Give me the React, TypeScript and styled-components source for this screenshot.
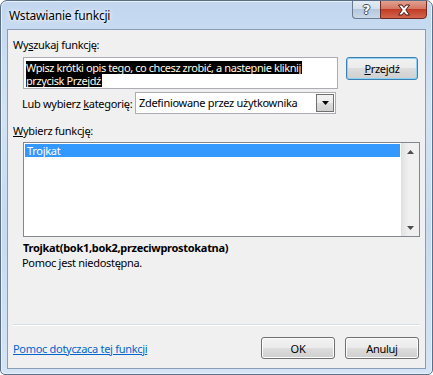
import React from "react";
import styled, { createGlobalStyle } from "styled-components";

const GlobalStyle = createGlobalStyle`
  html, body {
    margin: 0;
    padding: 0;
    background: #ffffff;
  }
  body {
    font-family: "Noto Sans", "Liberation Sans", sans-serif;
    font-size: 11px;
    letter-spacing: -0.3px;
    color: #000;
  }
`;

export default function App() {
  return (
    <>
      <GlobalStyle />
      <Window>
        <TitleBar>
          <TitleText>Wstawianie funkcji</TitleText>
          <CaptionButtons>
            <HelpButton>?</HelpButton>
            <CloseButton>
              <svg width="14" height="12" viewBox="0 0 14 12">
                <path
                  d="M1.5 1 H5 L7 3.6 L9 1 H12.5 L8.8 6 L12.5 11 H9 L7 8.4 L5 11 H1.5 L5.2 6 Z"
                  fill="#fff"
                  stroke="#4b1510"
                  strokeWidth="1"
                  strokeLinejoin="round"
                />
              </svg>
            </CloseButton>
          </CaptionButtons>
        </TitleBar>

        <Panel>
          <SectionLabel>
            Wy<u>s</u>zukaj funkcję:
          </SectionLabel>
          <SearchRow>
            <SearchBox>
              <Selected>Wpisz krótki opis tego, co chcesz zrobić, a nastepnie kliknij</Selected>
              <br />
              <Selected>przycisk Przejdź</Selected>
            </SearchBox>
            <Button $default $width={72} $height={23}>
              <u>P</u>rzejdź
            </Button>
          </SearchRow>

          <CategoryRow>
            <CategoryLabel>
              Lub wybierz <u>k</u>ategorię:
            </CategoryLabel>
            <Select>
              <SelectText>Zdefiniowane przez użytkownika</SelectText>
              <DropButton>
                <svg width="7" height="4" viewBox="0 0 7 4">
                  <path d="M0 0 H7 L3.5 4 Z" fill="#000" />
                </svg>
              </DropButton>
            </Select>
          </CategoryRow>

          <SectionLabel $top={9}>
            <u>W</u>ybierz funkcję:
          </SectionLabel>
          <ListBox>
            <ListItems>
              <ListItem $selected>Trojkat</ListItem>
            </ListItems>
            <ScrollBar>
              <ScrollArrow>
                <svg width="7" height="4" viewBox="0 0 7 4">
                  <path d="M0 4 H7 L3.5 0 Z" fill="#4d4d4d" />
                </svg>
              </ScrollArrow>
              <ScrollArrow>
                <svg width="7" height="4" viewBox="0 0 7 4">
                  <path d="M0 0 H7 L3.5 4 Z" fill="#4d4d4d" />
                </svg>
              </ScrollArrow>
            </ScrollBar>
          </ListBox>

          <Signature>Trojkat(bok1,bok2,przeciwprostokatna)</Signature>
          <HelpText>Pomoc jest niedostępna.</HelpText>

          <Spacer />
          <Separator />
          <Footer>
            <HelpLink href="#">Pomoc dotyczaca tej funkcji</HelpLink>
            <FooterButtons>
              <Button $width={74} $height={22}>OK</Button>
              <Button $width={74} $height={22}>Anuluj</Button>
            </FooterButtons>
          </Footer>
        </Panel>
      </Window>
    </>
  );
}

const Window = styled.div`
  box-sizing: border-box;
  width: 433px;
  height: 375px;
  border: 1px solid #5a6e88;
  border-radius: 7px 7px 5px 5px;
  background: linear-gradient(180deg, #c2d7ef 0%, #d3e3f5 30%, #c6daf1 60%, #d5e4f6 100%);
  box-shadow: inset 0 0 0 1px #e9f1fb;
  padding: 0 6px 5px 6px;
  display: flex;
  flex-direction: column;
  overflow: hidden;
`;

const TitleBar = styled.div`
  height: 28px;
  display: flex;
  justify-content: space-between;
  align-items: flex-start;
`;

const TitleText = styled.div`
  font-family: "Noto Sans", "Liberation Sans", sans-serif;
  font-size: 12px;
  letter-spacing: -0.2px;
  line-height: 28px;
  padding-left: 2px;
  padding-top: 1px;
  text-shadow: 0 0 6px #ffffff, 0 0 3px #ffffff;
`;

const CaptionButtons = styled.div`
  display: flex;
  margin-right: -1px;
  margin-top: -1px;
`;

const HelpButton = styled.div`
  box-sizing: border-box;
  width: 28px;
  height: 19px;
  border: 1px solid #6b7c92;
  border-right: none;
  border-radius: 0 0 0 4px;
  background: linear-gradient(180deg, #e3ecf6 0%, #d3dfec 45%, #b6c8dc 50%, #c9d8e8 100%);
  color: #ffffff;
  font-family: "DejaVu Sans", sans-serif;
  font-weight: bold;
  font-size: 13px;
  letter-spacing: 0;
  line-height: 17px;
  text-align: center;
  text-shadow: -1px 0 #3f4b5a, 1px 0 #3f4b5a, 0 -1px #3f4b5a, 0 1px #3f4b5a;
`;

const CloseButton = styled.div`
  box-sizing: border-box;
  width: 47px;
  height: 19px;
  border: 1px solid #6d2a22;
  border-radius: 0 0 4px 0;
  background: linear-gradient(180deg, #e3a08f 0%, #d57864 45%, #c23c25 50%, #d2654e 100%);
  display: flex;
  align-items: center;
  justify-content: center;
`;

const Panel = styled.div`
  flex: 1;
  display: flex;
  flex-direction: column;
  border: 1px solid #8a9db6;
  background: #f0f0f0;
  padding-top: 7px;
`;

const SectionLabel = styled.div<{ $top?: number }>`
  margin-left: 5px;
  margin-top: ${({ $top }) => $top ?? 0}px;
  line-height: 15px;
  height: 15px;
`;

const SearchRow = styled.div`
  display: flex;
  align-items: flex-start;
  margin-top: 5px;
  margin-left: 15px;
  gap: 8px;
`;

const SearchBox = styled.div`
  box-sizing: border-box;
  width: 315px;
  height: 32px;
  border: 1px solid #abadb3;
  background: #ffffff;
  padding: 3px 0 0 2px;
  line-height: 13px;
  white-space: nowrap;
  letter-spacing: -0.42px;
`;

const Selected = styled.span`
  display: inline-block;
  height: 13px;
  line-height: 13px;
  background: #000000;
  color: #fffbe6;
  padding-right: 1px;
`;

const Button = styled.div<{ $default?: boolean; $width: number; $height: number }>`
  box-sizing: border-box;
  width: ${({ $width }) => $width}px;
  height: ${({ $height }) => $height}px;
  border: 1px solid ${({ $default }) => ($default ? "#3c7fb1" : "#707070")};
  border-radius: 3px;
  background: linear-gradient(180deg, #f2f2f2 0%, #ebebeb 49%, #dddddd 50%, #cfcfcf 100%);
  box-shadow: inset 0 0 0 1px ${({ $default }) => ($default ? "#8ed3f5" : "#fcfcfc")};
  display: flex;
  align-items: center;
  justify-content: center;
  line-height: 15px;
`;

const CategoryRow = styled.div`
  display: flex;
  align-items: center;
  margin-top: 3px;
  margin-left: 14px;
`;

const CategoryLabel = styled.div`
  width: 113px;
  line-height: 15px;
  white-space: nowrap;
`;

const Select = styled.div`
  box-sizing: border-box;
  width: 201px;
  height: 22px;
  border: 1px solid #abadb3;
  background: #ffffff;
  display: flex;
  align-items: stretch;
  justify-content: space-between;
`;

const SelectText = styled.div`
  padding-left: 3px;
  line-height: 20px;
`;

const DropButton = styled.div`
  box-sizing: border-box;
  width: 18px;
  margin: 1px;
  border: 1px solid #707070;
  background: linear-gradient(180deg, #f2f2f2 0%, #ebebeb 49%, #dddddd 50%, #cfcfcf 100%);
  display: flex;
  align-items: center;
  justify-content: center;
`;

const ListBox = styled.div`
  box-sizing: border-box;
  width: 397px;
  height: 95px;
  margin-top: 4px;
  margin-left: 15px;
  border: 1px solid #828790;
  background: #ffffff;
  display: flex;
`;

const ListItems = styled.div`
  flex: 1;
  padding: 1px;
`;

const ListItem = styled.div<{ $selected?: boolean }>`
  height: 13px;
  line-height: 13px;
  padding-left: 2px;
  background: ${({ $selected }) => ($selected ? "#3399ff" : "transparent")};
  color: ${({ $selected }) => ($selected ? "#ffffff" : "#000000")};
`;

const ScrollBar = styled.div`
  width: 17px;
  background: linear-gradient(90deg, #e3e3e3 0%, #f0f0f0 40%, #f0f0f0 100%);
  border-left: 1px solid #e0e0e0;
  display: flex;
  flex-direction: column;
  justify-content: space-between;
`;

const ScrollArrow = styled.div`
  height: 17px;
  display: flex;
  align-items: center;
  justify-content: center;
`;

const Signature = styled.div`
  margin-top: 3px;
  margin-left: 15px;
  font-weight: bold;
  line-height: 15px;
`;

const HelpText = styled.div`
  margin-left: 14px;
  line-height: 15px;
`;

const Spacer = styled.div`
  flex: 1;
`;

const Separator = styled.div`
  margin: 0 5px 0 5px;
  height: 1px;
  background: #d5dfe5;
  border-bottom: 1px solid #ffffff;
`;

const Footer = styled.div`
  display: flex;
  align-items: center;
  justify-content: space-between;
  padding: 11px 6px 9px 5px;
`;

const HelpLink = styled.a`
  color: #0066cc;
  text-decoration: underline;
  line-height: 15px;
`;

const FooterButtons = styled.div`
  display: flex;
  gap: 10px;
`;
